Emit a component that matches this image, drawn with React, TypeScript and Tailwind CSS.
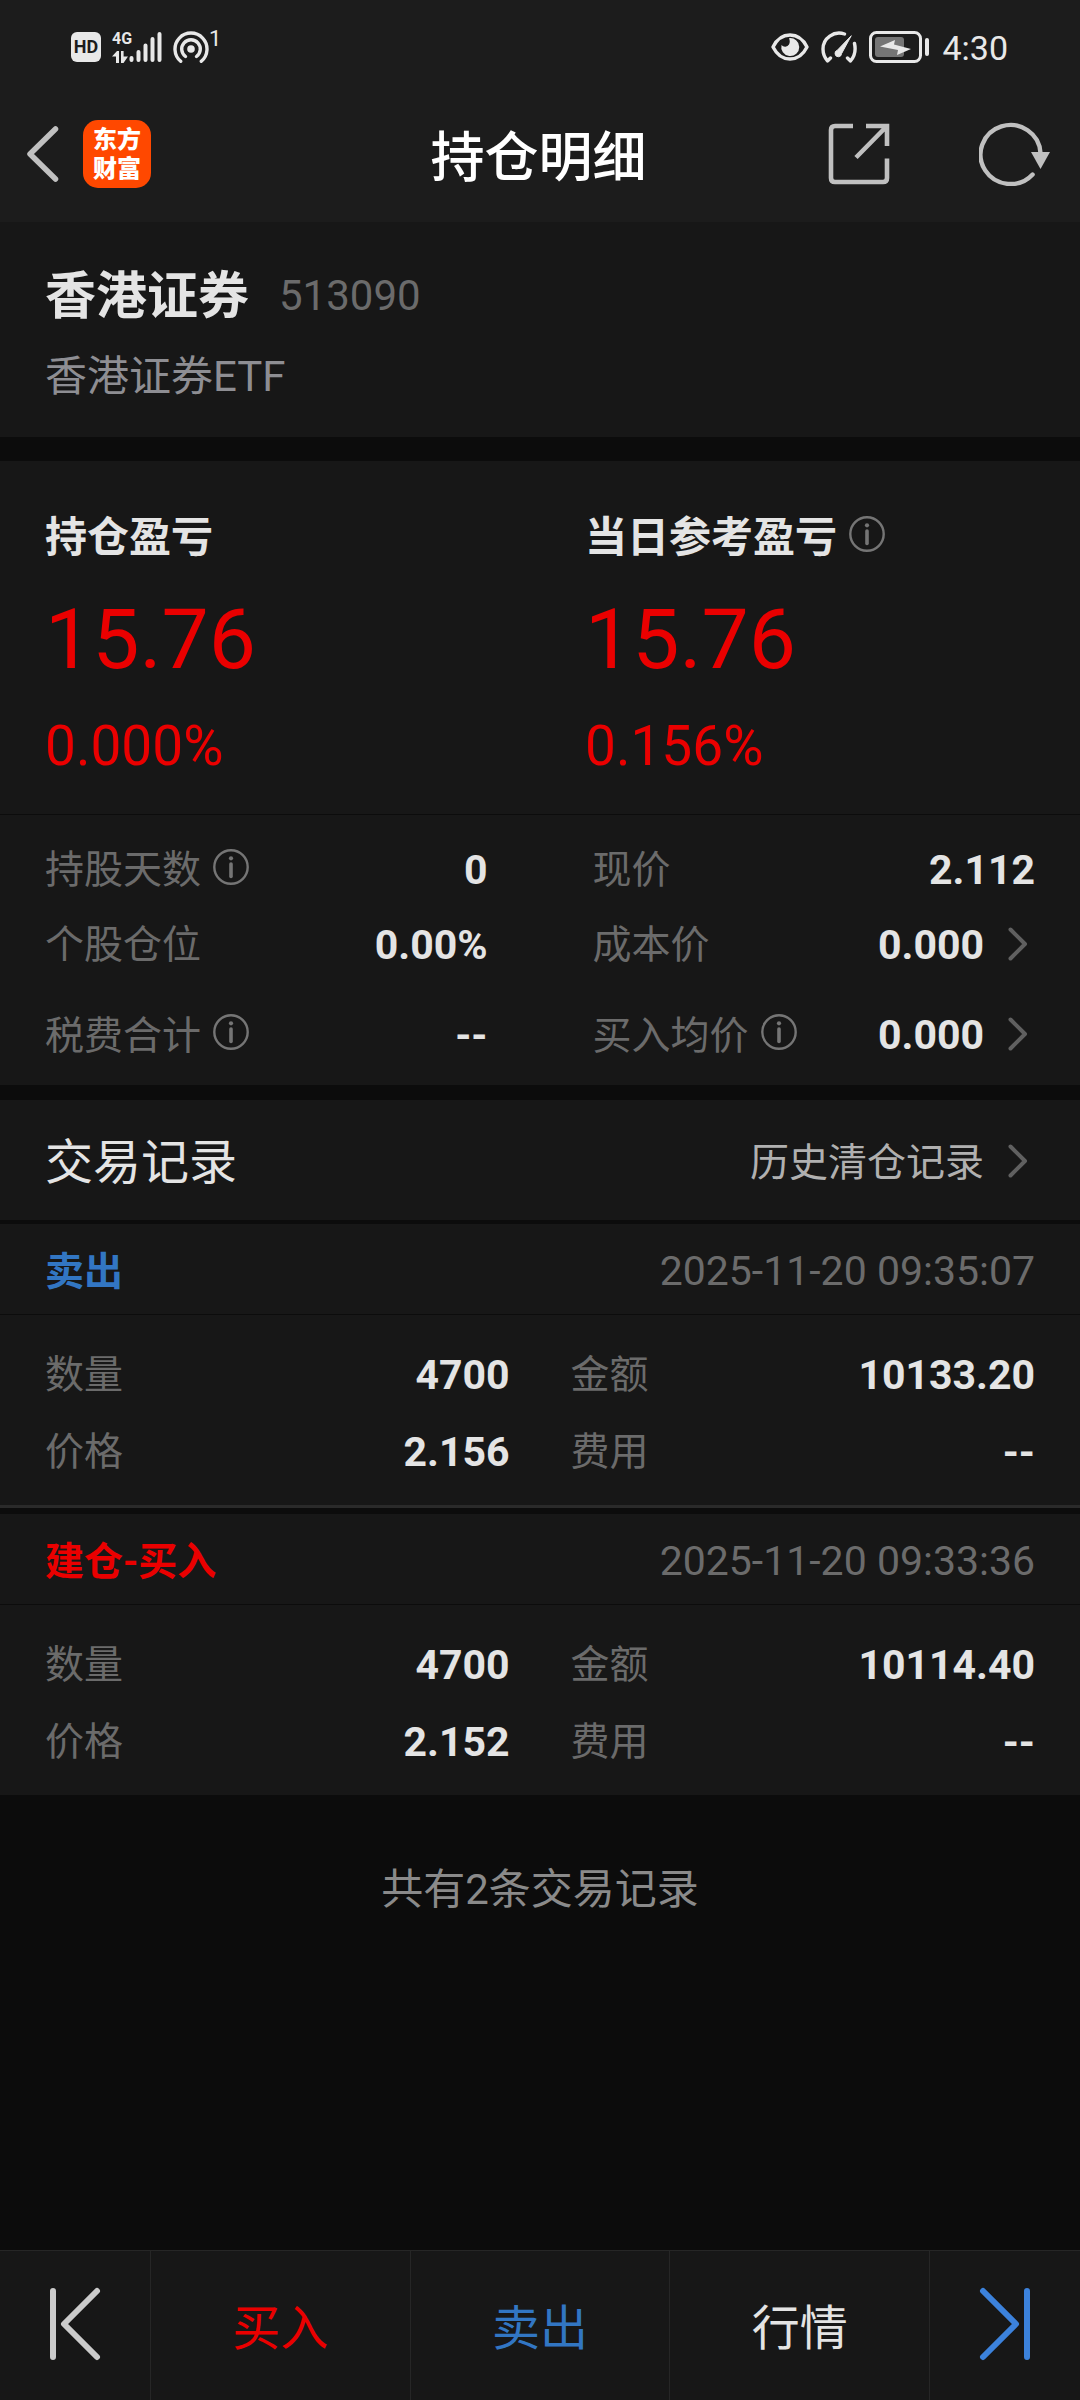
import React from 'react';

const records = [
  {
    type: '卖出',
    color: 'text-[#3276c3]',
    time: '2025-11-20 09:35:07',
    amount: '4700',
    total: '10133.20',
    price: '2.156',
    fee: '--',
  },
  {
    type: '建仓-买入',
    color: 'text-[#ea0000]',
    time: '2025-11-20 09:33:36',
    amount: '4700',
    total: '10114.40',
    price: '2.152',
    fee: '--',
  },
];

const InfoIcon = () => (
  <svg className="mb-2 h-9 w-9 shrink-0 text-[#757575]" viewBox="0 0 36 36" fill="none" stroke="currentColor" aria-hidden="true">
    <circle cx="18" cy="18" r="16.7" strokeWidth="2.4" />
    <circle cx="18" cy="9.3" r="2.1" fill="currentColor" stroke="none" />
    <path d="M18 15v12.5" strokeWidth="3.6" strokeLinecap="round" />
  </svg>
);

const ChevronIcon = () => (
  <svg className="mb-1 h-9 w-5 shrink-0 text-[#606060]" viewBox="0 0 20 36" fill="none" stroke="currentColor" aria-hidden="true">
    <path d="M2.5 3.5 17 18 2.5 32.5" strokeWidth="4" strokeLinecap="round" strokeLinejoin="round" />
  </svg>
);

const StatusBar = () => (
  <div className="flex h-[94px] items-center justify-between pl-[71px] pr-[72px] text-[#e8e8e8]">
    <div className="flex items-center">
      <span className="flex h-[30px] w-[30px] items-center justify-center rounded-md bg-[#e8e8e8] font-[Roboto] text-lg font-bold leading-none text-[#1c1c1c]">
        HD
      </span>
      <div className="ml-[11px] flex w-[17px] flex-col font-[Roboto] text-base font-bold leading-4">
        <span>4G</span>
        <svg className="mt-1 h-3 w-4" viewBox="0 0 16 12" fill="currentColor" aria-hidden="true">
          <path d="M0 5.5 5 0h2v12H4V5.5zM9 0h2.6v5.5H16L11.5 12H9z" />
        </svg>
      </div>
      <svg className="h-8 w-[34px]" viewBox="0 0 34 32" stroke="currentColor" strokeWidth="4" strokeLinecap="round" aria-hidden="true">
        <path d="M2.5 27v2M9.5 21v8M16.5 14.5v14.5M23.5 8v21M30.5 3v26" />
      </svg>
      <svg className="ml-2.5 h-8 w-9" viewBox="0 0 36 32" fill="none" stroke="currentColor" strokeWidth="3.4" strokeLinecap="round" aria-hidden="true">
        <circle cx="18" cy="18" r="3.8" fill="currentColor" stroke="none" />
        <path d="M12.5 25.5A9.3 9.3 0 1 1 23.5 25.5" />
        <path d="M7.7 30.3A16 16 0 1 1 28.3 30.3" />
      </svg>
      <span className="mb-4 font-[Roboto] text-[22px] leading-4">1</span>
    </div>

    <div className="flex items-center">
      <svg className="h-7 w-[38px]" viewBox="0 0 38 28" fill="none" aria-hidden="true">
        <path d="M2 14C10 -2 28 -2 36 14 28 30 10 30 2 14Z" stroke="currentColor" strokeWidth="3.4" strokeLinejoin="round" />
        <path d="M18 5.2a9 9 0 1 1-7.5 6.8 4.5 4.5 0 0 0 7.5-.5c1-2 1-4 0-6.3Z" fill="currentColor" />
      </svg>
      <svg className="ml-3 h-8 w-9" viewBox="0 0 36 32" fill="none" stroke="currentColor" strokeWidth="3.4" strokeLinecap="round" strokeLinejoin="round" aria-hidden="true">
        <path d="M23.5 3C13 -.5 2 7 2 18c0 5 2 9 4.500 12l3-3M33.500 12.500c1.500 6.500-.2 13-4 17.500l-3-3" />
        <path d="M30 5 16.300 19.300a3.300 3.300 0 1 0 4.300 3.500Z" fill="currentColor" strokeWidth="1" />
      </svg>
      <svg className="ml-3 h-8 w-[61px]" viewBox="0 0 61 32" fill="none" aria-hidden="true">
        <rect x="1.5" y="1.5" width="50" height="29" rx="6" stroke="currentColor" strokeWidth="3" />
        <rect x="6" y="6" width="29" height="20" rx="3" fill="#757575" />
        <path d="M11 15.5 26 9l-1 4.500 17 4.500-14 6 1-5Z" fill="currentColor" />
        <rect x="56" y="7" width="4" height="18" rx="2" fill="currentColor" />
      </svg>
      <span className="ml-3 pt-0.5 font-[Roboto] text-[34px] leading-8">4:30</span>
    </div>
  </div>
);

const TitleBar = () => (
  <div className="grid grid-cols-3 items-center pb-[34px] pl-[26px] pr-[29px] pt-[26px]">
    <div className="flex items-center gap-6">
      <button type="button" aria-label="返回">
        <svg className="h-[60px] w-[33px] text-[#c0c0c0]" viewBox="0 0 33 60" fill="none" stroke="currentColor" aria-hidden="true">
          <path d="M29.5 5 4 30 29.5 55" strokeWidth="5.5" strokeLinecap="round" strokeLinejoin="round" />
        </svg>
      </button>
      <a href="#home" className="flex h-[68px] w-[68px] flex-col items-center justify-center rounded-[15px] bg-[#ff4800] pt-0.5 text-2xl font-black leading-[29px] text-white">
        <span>东方</span>
        <span>财富</span>
      </a>
    </div>
    <h1 className="pt-2.5 text-center text-[54px] font-medium leading-[58px] text-white">持仓明细</h1>
    <div className="flex items-center justify-end gap-[89px] text-[#c0c0c0]">
      <button type="button" aria-label="分享">
        <svg className="h-[62px] w-[62px]" viewBox="0 0 62 62" fill="none" stroke="currentColor" strokeWidth="4.6" aria-hidden="true">
          <path d="M25 3H7Q3 3 3 7v48q0 4 4 4h48q4 0 4-4V35.5" />
          <path d="M38 3h21v20M59 3 28 34.5" />
        </svg>
      </button>
      <button type="button" aria-label="刷新">
        <svg className="h-16 w-[72px]" viewBox="0 0 72 64" fill="none" stroke="currentColor" aria-hidden="true">
          <path d="M53.6 52.5A30 29.500 0 1 1 61.500 31" strokeWidth="4.4" strokeLinecap="round" />
          <path d="M52 30h19L61.5 47Z" fill="currentColor" stroke="none" />
        </svg>
      </button>
    </div>
  </div>
);

const Stat = ({ label, value, info, arrow }: { label: string; value: string; info?: boolean; arrow?: boolean }) => (
  <div className="flex flex-1 items-center">
    <dt className="flex items-center gap-3 text-[39px] text-[#6b6b6b]">
      {label}
      {info && <InfoIcon />}
    </dt>
    <dd className="ml-auto flex items-center gap-6 text-[41px] font-bold text-[#e4e4e4]">
      {value}
      {arrow && (
        <button type="button" aria-label={label} className="mr-[7px]">
          <ChevronIcon />
        </button>
      )}
    </dd>
  </div>
);

const Profit = ({ label, value, percent, info }: { label: string; value: string; percent: string; info?: boolean }) => (
  <div className="flex-1 pl-[45px]">
    <h3 className="flex items-center gap-3 text-[42px] font-bold leading-[60px] text-[#e4e4e4]">
      {label}
      {info && <InfoIcon />}
    </h3>
    <p className="mt-8 text-[84px] leading-[80px] text-[#ea0000]">{value}</p>
    <p className="mt-9 text-[55px] leading-[60px] text-[#ea0000]">{percent}</p>
  </div>
);

const App = () => {
  return (
    <div className="flex min-h-screen flex-col bg-[#0c0c0c] font-[Roboto,'Noto_Sans_CJK_SC',sans-serif]">
      <header className="bg-[#1c1c1c]">
        <StatusBar />
        <TitleBar />
      </header>

      <main>
        <section className="bg-[#171717] px-[45px] pb-[30px] pt-[38px]">
          <div className="flex items-center gap-[30px]">
            <h2 className="pt-1 text-[51px] font-bold leading-[66px] text-[#e4e4e4]">香港证券</h2>
            <span className="text-[42px] text-[#6b6b6b]">513090</span>
          </div>
          <p className="mt-4 text-[42px] leading-[61px] text-[#8e8e93]">香港证券ETF</p>
        </section>

        <section className="mt-6 bg-[#171717]">
          <div className="flex border-b border-[#0c0c0c] pb-[38px] pt-[47px]">
            <Profit label="持仓盈亏" value="15.76" percent="0.000%" />
            <Profit label="当日参考盈亏" value="15.76" percent="0.156%" info />
          </div>
          <dl className="px-[45px] pt-[18px]">
            <div className="flex h-[75px] gap-[105px]">
              <Stat label="持股天数" value="0" info />
              <Stat label="现价" value="2.112" />
            </div>
            <div className="flex h-[75px] gap-[105px]">
              <Stat label="个股仓位" value="0.00%" />
              <Stat label="成本价" value="0.000" arrow />
            </div>
            <div className="flex h-[102px] gap-[105px] pt-1">
              <Stat label="税费合计" value="--" info />
              <Stat label="买入均价" value="0.000" info arrow />
            </div>
          </dl>
        </section>

        <section className="mt-[15px]">
          <div className="flex h-[120px] items-center justify-between bg-[#171717] px-[45px] pt-1.5">
            <h2 className="text-5xl text-[#e4e4e4]">交易记录</h2>
            <a href="#history" className="mr-[7px] flex items-center gap-6 text-[39px] text-[#b0b0b0]">
              历史清仓记录
              <ChevronIcon />
            </a>
          </div>

          <div className="mt-1 flex flex-col gap-1.5">
            {records.map((record, index) => (
              <article
                key={index}
                className="border-[#2a2a2a] bg-[#171717] not-last:border-b-3"
              >
                <div className="flex h-[91px] items-center justify-between border-b border-[#0c0c0c] px-[45px] pt-1.5">
                  <h3 className={`text-[39px] font-bold ${record.color}`}>{record.type}</h3>
                  <time className="text-[41px] text-[#6b6b6b]">{record.time}</time>
                </div>
                <dl className="grid grid-cols-2 gap-x-[61px] px-[45px] pb-[14px] pt-[22px] leading-[77px]">
                  {[
                    ['数量', record.amount],
                    ['金额', record.total],
                    ['价格', record.price],
                    ['费用', record.fee],
                  ].map(([label, value]) => (
                    <div key={label} className="flex items-center justify-between">
                      <dt className="text-[39px] text-[#6b6b6b]">{label}</dt>
                      <dd className="text-[41px] font-bold text-[#e4e4e4]">{value}</dd>
                    </div>
                  ))}
                </dl>
              </article>
            ))}
          </div>
        </section>

        <p className="py-16 text-center text-[42px] leading-[62px] text-[#8a8a8a]">共有2条交易记录</p>
      </main>

      <nav className="mt-auto flex h-[150px] divide-x divide-[#262626] border-t border-[#262626] bg-[#171717] text-5xl">
        <button type="button" aria-label="上一个" className="flex w-[151px] items-center justify-center pb-1 text-[#cbcbcb]">
          <svg className="h-[74px] w-[54px]" viewBox="0 0 54 74" fill="none" stroke="currentColor" strokeWidth="6" strokeLinecap="round" strokeLinejoin="round" aria-hidden="true">
            <path d="M5 4v66M49 4 16 37 49 70" />
          </svg>
        </button>
        <button type="button" className="flex-1 pt-1.5 text-[#ea0000]">买入</button>
        <button type="button" className="flex-1 pt-1.5 text-[#3276c3]">卖出</button>
        <button type="button" className="flex-1 pt-1.5 text-[#e4e4e4]">行情</button>
        <button type="button" aria-label="下一个" className="flex w-[150px] items-center justify-center pb-1 text-[#3c82dc]">
          <svg className="h-[74px] w-[54px]" viewBox="0 0 54 74" fill="none" stroke="currentColor" strokeWidth="6" strokeLinecap="round" strokeLinejoin="round" aria-hidden="true">
            <path d="M49 4v66M5 4 38 37 5 70" />
          </svg>
        </button>
      </nav>
    </div>
  );
};

export default App;
